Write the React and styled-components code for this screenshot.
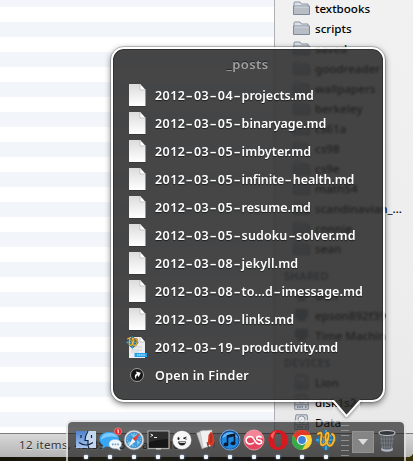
import React from "react";
import styled, { createGlobalStyle } from "styled-components";

const Global = createGlobalStyle`
  * { box-sizing: border-box; }
  html, body { margin: 0; }
  body { width: 413px; height: 461px; overflow: hidden; background: #fff; }
`;

const Desktop = styled.main`
  position: relative;
  width: 413px;
  height: 461px;
  overflow: hidden;
  background: linear-gradient(90deg, #14130a, #2a2508 30%, #0c0c08 60%, #3a3108);
  font-family: "Noto Sans", "Open Sans", sans-serif;
`;

const FinderWindow = styled.section`
  display: grid;
  grid-template: 433px 24px / 274px 139px;
  border-radius: 0 0 5px 0;
  overflow: hidden;
  background: #eee;
`;

const FileList = styled.div`
  background: repeating-linear-gradient(#fff 0 15px, #f2f6fb 15px 30px) 0 7px;
  box-shadow: inset 0 7px #f2f6fb;
`;

const Sidebar = styled.nav`
  display: flex;
  flex-direction: column;
  overflow: hidden;
  padding-left: 9px;
  border-left: 1px solid #aeb0b4;
  background: linear-gradient(#f1f1f1, #ededed 70%, #e8e8e8);
  color: #000;
`;

const Heading = styled.h2`
  margin: 0;
  height: 27px;
  padding-top: 10px;
  font-size: 11px;
  line-height: 16px;
  font-weight: 600;
  letter-spacing: 0.3px;
  color: #5d6673;
`;

const Place = styled.div`
  display: flex;
  flex: none;
  align-items: center;
  gap: 5px;
  height: 20px;
  margin-top: ${(p) => (p.$first ? -2 : 0)}px;
  padding-left: 9px;
  font-size: 11.6px;
  font-weight: 500;
  white-space: nowrap;
  svg { flex: none; }
`;

const StatusBar = styled.footer`
  grid-column: 1 / -1;
  padding-left: 19px;
  border-top: 1px solid #7c7c7c;
  background: linear-gradient(#d8d8d8, #b4b4b4);
  color: #333;
  font-size: 11.5px;
  line-height: 22px;
  letter-spacing: 0.35px;
  white-space: pre;
  text-shadow: 0 1px rgba(255, 255, 255, 0.5);
`;

/* The clip leaves a gap in the bottom border where the tail joins. */
const Popover = styled.section`
  position: absolute;
  left: 111px;
  top: 47px;
  width: 274px;
  height: 355px;
  border: 2px solid rgba(255, 255, 255, 0.88);
  border-radius: 13px;
  outline: 1px solid rgba(90, 90, 90, 0.35);
  background: rgba(40, 40, 40, 0.86);
  background-clip: padding-box;
  backdrop-filter: blur(0.8px);
  box-shadow: inset 0 0 0 1px #303030, 0 2px 6px rgba(0, 0, 0, 0.55);
  clip-path: polygon(
    -20px -20px, 294px -20px, 294px 380px, 249px 380px, 249px 352px,
    222px 352px, 222px 380px, -20px 380px
  );
  color: #fff;
`;

const Title = styled.h1`
  margin: 7px 0 0;
  padding-right: 1px;
  height: 25px;
  text-align: center;
  font-size: 13px;
  line-height: 17px;
  font-weight: 600;
  letter-spacing: 0.4px;
  color: #a0a0a0;
  text-shadow: 0 -1px #222;
`;

const Entries = styled.ul`
  display: flex;
  flex-direction: column;
  margin: 0;
  padding: 0;
  list-style: none;
`;

const Entry = styled.li`
  display: flex;
  align-items: center;
  height: 28px;
  padding-left: 12px;
  gap: 8px;
  font-size: 12.5px;
  font-weight: 600;
  letter-spacing: ${(p) => p.$track ?? 0}px;
  white-space: pre;
  text-shadow: 0 1px 1px rgba(0, 0, 0, 0.6);
  svg { flex: none; }
`;

const Digits = styled.span`
  letter-spacing: 0.45px;
`;

const Dash = styled.span`
  display: inline-block;
  width: 8.6px;
  text-align: center;
  letter-spacing: 0;
  transform: scaleX(1.7);
`;

const Tail = styled.svg`
  position: absolute;
  left: 325px;
  top: 396px;
  filter: drop-shadow(0 1px 1.5px rgba(0, 0, 0, 0.45));
`;

const Dock = styled.section`
  position: absolute;
  left: 66px;
  top: 420px;
  width: 340px;
  height: 46px;
  display: flex;
  align-items: flex-start;
  padding: 7px 0 0 6px;
  border: 2px solid rgba(225, 225, 225, 0.75);
  border-radius: 6px;
  background: linear-gradient(rgba(30, 30, 30, 0.67), rgba(26, 26, 26, 0.67));
  background-clip: padding-box;
`;

const DockApp = styled.div`
  display: flex;
  flex-direction: column;
  align-items: center;
  width: 24px;
  flex: none;
  svg { display: block; overflow: visible; }
`;

const Light = styled.i`
  width: 4px;
  height: 4px;
  margin-top: 4px;
  border-radius: 1px;
  background: #f1f6ff;
  box-shadow: 0 0 2px #9fc6ff;
`;

const Separator = styled.div`
  width: 8px;
  height: 34px;
  margin: -4px 0 0 3px;
  background: repeating-linear-gradient(rgba(190, 190, 190, 0.55) 0 1px, transparent 1px 5px);
`;

const StackTile = styled.div`
  display: grid;
  place-items: center;
  width: 22px;
  height: 22px;
  margin: 2px 0 0 3px;
  background: #858585;
  border: 1px solid #929292;
`;

const TrashSlot = styled.div`
  margin-left: 4px;
`;

const Folder = () => (
  <svg width="17" height="14" viewBox="0 0 17 14">
    <path d="M1 4V2q0-1 1-1h5l1.5 2H15v10H1z" fill="#dce1e7" stroke="#8993a1" />
    <path d="M.5 5h16v8.5H.5z" fill="#b8bdc6" stroke="#7f8998" />
    <path d="M1.5 6h14" stroke="#d7dbe1" />
  </svg>
);

const Disk = () => (
  <svg width="17" height="16" viewBox="0 0 17 16">
    <path d="M3 .8h11l1.3 9.5v5H1.7v-5z" fill="#d5d9df" stroke="#858e9c" />
    <circle cx="8.5" cy="5.5" r="3.5" fill="#eceef1" stroke="#8a93a0" />
    <path d="M8.500 5.500 6 8M2 10.800h13" stroke="#858e9c" fill="none" />
    <path d="M4 13h6M12 13h1.500" stroke="#687384" strokeWidth="1.5" strokeDasharray="1.5 .8" />
  </svg>
);

const Machine = () => (
  <svg width="17" height="14" viewBox="0 0 17 14">
    <rect x="2" y="1" width="13" height="9" rx="2" fill="#8a93a1" />
    <path d="M5 10h7l1 3H4z" fill="#8a93a1" />
  </svg>
);

const Page = () => (
  <svg width="22" height="24" viewBox="0 0 22 24">
    <defs>
      <linearGradient id="paper" x2="0" y2="1">
        <stop stopColor="#dcdcdc" />
        <stop offset="1" stopColor="#fff" />
      </linearGradient>
    </defs>
    <path d="M4 2h11l5.500 5.500V23H4z" fill="#1f1f1f" opacity=".5" transform="translate(0 .8)" />
    <path d="M4 1h11l5.500 6v16H4z" fill="url(#paper)" />
    <path d="M15 1v6h5.500z" fill="#fff" />
    <path d="M15 1v6h5.500" fill="none" stroke="#aaa" strokeWidth=".6" />
  </svg>
);

const Squiggle = ({ x = 0, y = 0, s = 1 }) => (
  <g transform={`translate(${x} ${y}) scale(${s})`}>
    <path d="M11 0 22 11 11 22 0 11z" fill="#1879b8" />
    <path d="M11 1v20M1 11h20M6 6l10 10M16 6 6 16" stroke="#5fc0ea" strokeWidth="1.2" />
    <path d="M3 5c4-3 4 0 3 5s0 8 4 5 4-10 3-11-4 2-2 8 5 6 7 2 2-8-1-9" fill="none" stroke="#7b5510" strokeWidth="3" strokeLinecap="round" />
    <path d="M3 5c4-3 4 0 3 5s0 8 4 5 4-10 3-11-4 2-2 8 5 6 7 2 2-8-1-9" fill="none" stroke="#f6b93b" strokeWidth="1.900" strokeLinecap="round" />
  </g>
);

const TextPage = () => (
  <svg width="22" height="24" viewBox="0 0 22 24">
    <path d="M4 2h12l4 5v16H4z" fill="#eee" />
    <path d="M15 2v5h5" fill="#fff" stroke="#aaa" strokeWidth=".6" />
    <path d="M8 12h9M6 15h11M6 17h8" stroke="#c3c7ca" strokeWidth=".8" />
    <rect x="9.5" y="18" width="13" height="4" fill="#23a0ea" />
    <path d="M12 20h8" stroke="#a5dcff" strokeWidth="1.6" strokeDasharray="1.5 .6" />
    <Squiggle x={1} y={1} s={0.58} />
  </svg>
);

const OpenArrow = () => (
  <svg width="22" height="24" viewBox="0 0 22 24">
    <circle cx="12" cy="12" r="6.5" fill="#171717" stroke="#a9a9a9" strokeWidth=".9" />
    <path d="M9.500 15.500c-.8-3 .5-5 3-5V8.300l4 3.200-4 3.100v-2c-1.500 0-2.500.9-3 2.900z" fill="#fff" transform="rotate(-25 12 12)" />
  </svg>
);

const FinderIcon = () => (
  <svg width="22" height="22" viewBox="0 0 22 22">
    <defs>
      <linearGradient id="face" x2="0" y2="1"><stop stopColor="#4d83cd" /><stop offset="1" stopColor="#a8c5ec" /></linearGradient>
    </defs>
    <path d="M1 2h20v17H1z" fill="url(#face)" />
    <path d="M12 2h9v17h-8l-.5-7H10q0-6 2-10z" fill="#c3d8ef" />
    <path d="M13 2q-3 5-3 9.500h3Q12.500 16 14 19.500M6 6v3M16.500 6v3M4 13.500q7 5 14 0" fill="none" stroke="#152440" strokeWidth="1.2" />
  </svg>
);

const MessagesIcon = () => (
  <svg width="23" height="22" viewBox="0 0 23 22">
    <path d="M10 3c6 0 10 3 10 7s-4 8-10 8l-3-.5L3 20l1-4c-7-5-3-13 6-13z" fill="#37a7f4" />
    <path d="M10 4c5 0 8 2 8.500 4.500C14 7 7 7 2 11c0-4 3-7 8-7z" fill="#9cd8ff" opacity=".7" />
    <path d="M16 10.500c4 0 6.500 2 6.500 4.500 0 2-1 3-2 3.500l.8 3-3.300-1.800c-5 .4-8-1.500-8-4.500s2.500-4.700 6-4.700z" fill="#f2f7fc" stroke="#9fb7cc" strokeWidth=".5" />
    <path d="M13 15.300h7" stroke="#6f9dc5" strokeWidth="1.8" strokeDasharray="1.6 1" />
    <circle cx="19" cy="2.5" r="3.6" fill="#e8232b" stroke="#ffb3b3" strokeWidth=".5" />
    <path d="M19.200.7v3.600M18.300 1.300l.9-.6" stroke="#fff" />
  </svg>
);

const SafariIcon = () => (
  <svg width="22" height="22" viewBox="0 0 22 22">
    <circle cx="11" cy="11" r="10" fill="#dcdfe1" stroke="#7a7f84" strokeWidth=".6" />
    <circle cx="11" cy="11" r="7.8" fill="#3f9add" stroke="#2264a0" strokeWidth=".5" />
    <path d="m6 12 6 5-8-2M8 5l7 1-4 4M14 11l3 2-3 3" fill="#7fc4ea" />
    <circle cx="11" cy="11" r="6.5" fill="none" stroke="#bfe3fb" strokeDasharray=".7 2" />
    <path d="m17 4-7.500 5.500 3 3z" fill="#e53e34" />
    <path d="m5 18 7.500-5.500-3-3z" fill="#f4f4f4" />
  </svg>
);

const TerminalIcon = () => (
  <svg width="23" height="22" viewBox="0 0 23 22">
    <rect x="1" y="2" width="21" height="17.5" fill="#161616" stroke="#a8a8a8" strokeWidth="1.2" />
    <path d="M2 3h19v7Q12 10 2 13z" fill="#fff" opacity=".1" />
    <path d="m3.500 5 2.500 1.300-2.500 1.300M7 8.500h3" stroke="#fff" fill="none" strokeWidth=".9" />
    <path d="M9 19.800h5" stroke="#ccc" strokeWidth="1.5" />
  </svg>
);

const SmileyIcon = () => (
  <svg width="22" height="22" viewBox="0 0 22 22">
    <circle cx="11" cy="11" r="9.6" fill="#f8f8f8" stroke="#555" strokeWidth=".5" />
    <ellipse cx="7.5" cy="9.500" rx="1" ry="1.500" fill="#222" />
    <path d="m15.500 8-3 1.200 3 1" stroke="#222" strokeWidth="1" fill="none" />
    <path d="M7 12.500h8q-.5 4-4 4t-4-4z" fill="#222" />
    <path d="M8.500 13.500h5.500" stroke="#fff" strokeWidth=".8" />
  </svg>
);

const PapersIcon = () => (
  <svg width="22" height="22" viewBox="0 0 22 22">
    <path d="m1.500 4 8-3 5 15-7.500 4z" fill="#d4d4d4" stroke="#999" strokeWidth=".5" />
    <path d="m5 2 12-1-1 16-8 2z" fill="#f0f0f0" stroke="#aaa" strokeWidth=".5" />
    <path d="m13.500 6 2.500-3.500L18.500 6l1.500 10-2-.5-1.500 2.500-2-2.500-2 1.500z" fill="#d93a25" />
    <path d="M16 5v9" stroke="#8e2418" strokeWidth="1" />
    <path d="m12 13 2 7M19.500 13l-.5 6" stroke="#444" strokeWidth="1" />
  </svg>
);

const MusicIcon = () => (
  <svg width="22" height="22" viewBox="0 0 22 22">
    <circle cx="11" cy="11" r="10" fill="#164b91" stroke="#84b9ec" strokeWidth=".8" />
    <circle cx="11" cy="11.5" r="8.5" fill="#1f88df" />
    <path d="M3 9a8.400 8.400 0 0 1 16 0Q11 5 3 9z" fill="#7ec5ff" opacity=".7" />
    <path d="M8.500 15.500V6.800l7-1.500v9" fill="none" stroke="#081b33" strokeWidth="1.6" />
    <path d="m8.500 7.500 7-1.500" stroke="#081b33" strokeWidth="2.4" />
    <ellipse cx="7" cy="15.5" rx="2.4" ry="1.9" fill="#081b33" />
    <ellipse cx="14" cy="14.3" rx="2.4" ry="1.9" fill="#081b33" />
  </svg>
);

const ScrobbleIcon = () => (
  <svg width="22" height="22" viewBox="0 0 22 22">
    <circle cx="11" cy="11" r="10" fill="#e5455f" stroke="#f8a2ae" strokeWidth=".8" />
    <path d="M2 10a9 9 0 0 1 18 0Q11 7 2 10z" fill="#ffafba" opacity=".6" />
    <path d="M11 13.500Q9.500 15 7.500 15A3.800 3.800 0 1 1 7.500 7.500c4.500 0 3.500 7.500 8.500 7.500 3.700 0 3.500-3.600 0-3.900-3.200-.3-3-3.700.2-3.700q1.600 0 2.300 1.300" fill="none" stroke="#fff" strokeWidth="1.6" />
  </svg>
);

const OperaIcon = () => (
  <svg width="22" height="22" viewBox="0 0 22 22">
    <path fillRule="evenodd" d="M11 1c6 0 9.500 4 9.500 10S17 21 11 21 1.500 17 1.500 11 5 1 11 1zm0 2.500c-2.800 0-3.600 3-3.600 7.500s.8 7.500 3.600 7.500 3.600-3 3.600-7.500S13.800 3.500 11 3.500z" fill="#d8171e" />
    <path d="M3.500 7q2-4.500 5.500-5-2 2-3 8z" fill="#ff7770" opacity=".8" />
  </svg>
);

const ChromeIcon = () => (
  <svg width="22" height="22" viewBox="0 0 22 22">
    <circle cx="11" cy="11" r="10" fill="#fcd03b" />
    <path d="M11 6h8.700A10 10 0 0 0 2.300 6L6.600 13.500z" fill="#e2382c" />
    <path d="M2.300 6A10 10 0 0 0 11 21l4.300-7.500L6.600 13.500z" fill="#37a84b" />
    <circle cx="11" cy="11" r="5" fill="#fff" />
    <circle cx="11" cy="11" r="3.9" fill="#3e82d6" />
  </svg>
);

const EditorIcon = () => (
  <svg width="22" height="22" viewBox="0 0 22 22"><Squiggle /></svg>
);

const TrashIcon = () => (
  <svg width="18" height="24" viewBox="0 0 18 24">
    <path d="M1 4h16l-2 17q-6 3-12 0z" fill="#555b62" opacity=".85" />
    <path d="m3 6 2 15M6 7l1 15M9 7v15M12 7l-1 15M15 6l-2 15M2 10h14M2 14h13M3 18h12" stroke="#8e9398" strokeWidth=".5" />
    <path d="M3 19q6 3 12 0l-.4 2.500q-5.600 2.500-11.200 0z" fill="#c4ccdc" opacity=".8" />
    <ellipse cx="9" cy="4" rx="8" ry="2.5" fill="#34383c" stroke="#c0c4c8" strokeWidth="1.1" />
  </svg>
);

const folders = [
  "textbooks", "scripts", "saved", "goodreader", "wallpapers", "berkeley", "cs61a",
  "cs98", "cs9e", "math54", "scandinavian_…", "connie", "sean",
];

const posts = [
  ["2012-03-04-projects.md", 0], ["2012-03-05-binaryage.md", 0], ["2012-03-05-imbyter.md", 0.05],
  ["2012-03-05-infinite-health.md", -0.12], ["2012-03-05-resume.md", 0],
  ["2012-03-05-sudoku-solver.md", 0.15], ["2012-03-08-jekyll.md", 0.15],
  ["2012-03-08-to…d-imessage.md", 0.05], ["2012-03-09-links.md", 0.1],
  ["2012-03-19-productivity.md", 0],
];

const apps = [
  FinderIcon, MessagesIcon, SafariIcon, TerminalIcon, SmileyIcon, PapersIcon,
  MusicIcon, ScrobbleIcon, OperaIcon, ChromeIcon, EditorIcon,
];

const FileName = ({ name }) => (
  <span>
    {name.split(/(-)/).map((part, i) =>
      part === "-" ? <Dash key={i}>-</Dash>
        : /^\d+$/.test(part) ? <Digits key={i}>{part}</Digits>
        : <React.Fragment key={i}>{part}</React.Fragment>
    )}
  </span>
);

export default function App() {
  return (
    <Desktop>
      <Global />
      <FinderWindow>
        <FileList />
        <Sidebar>
          {folders.map((name, i) => (
            <Place key={name} $first={i === 0}><Folder />{name}</Place>
          ))}
          <Heading>SHARED</Heading>
          <Place><Machine />dish</Place>
          <Place><Machine />epson892f39</Place>
          <Place><Machine />Time Machin</Place>
          <Heading>DEVICES</Heading>
          <Place><Disk />Lion</Place>
          <Place><Disk />disk1s2</Place>
          <Place><Disk />Data</Place>
        </Sidebar>
        <StatusBar>12 items, 43.39 GB available</StatusBar>
      </FinderWindow>
      <Dock>
        {apps.map((Icon, i) => (
          <DockApp key={i}><Icon /><Light /></DockApp>
        ))}
        <Separator />
        <StackTile>
          <svg width="10" height="6" viewBox="0 0 10 6"><path d="M0 0h10L5 6z" fill="#ddd" /></svg>
        </StackTile>
        <TrashSlot><TrashIcon /></TrashSlot>
      </Dock>
      <Popover>
        <Title>_posts</Title>
        <Entries>
          {posts.map(([name, track]) => (
            <Entry key={name} $track={track}>
              {name.includes("productivity") ? <TextPage /> : <Page />}
              <FileName name={name} />
            </Entry>
          ))}
          <Entry $track={0.3}><OpenArrow />Open in Finder</Entry>
        </Entries>
      </Popover>
      <Tail width="44" height="26" viewBox="0 0 44 26">
        <path d="M8 3h27v3L21.500 20 8 6z" fill="#282828" fillOpacity=".84" />
        <path d="M7 5h1.500l13 15.200L35 5h1" fill="none" stroke="#fff" strokeWidth="2" strokeLinejoin="round" />
      </Tail>
    </Desktop>
  );
}
